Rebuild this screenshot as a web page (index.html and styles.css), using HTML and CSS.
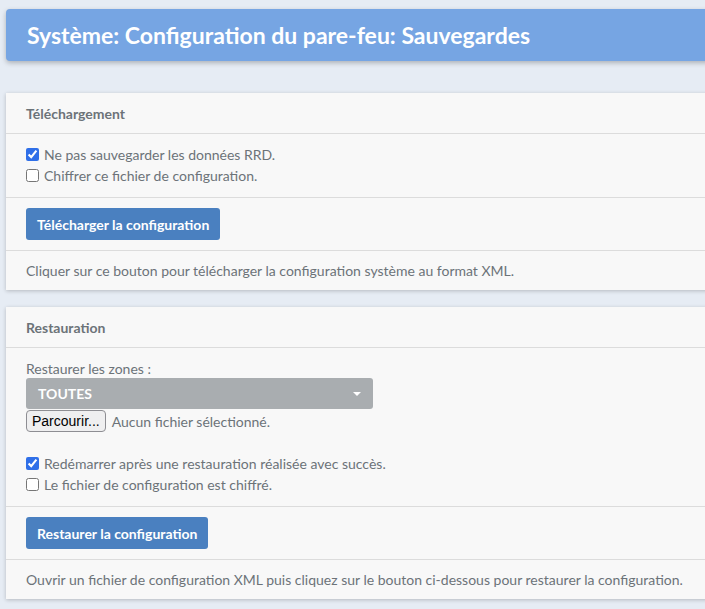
FILE: index.html
```html
<!DOCTYPE html>
<html lang="fr">
<head>
<meta charset="utf-8">
<title>Sauvegardes</title>
<link rel="stylesheet" href="styles.css">
</head>
<body>
<div class="page">
  <div class="title-bar"><h1>Système: Configuration du pare-feu: Sauvegardes</h1></div>

  <section class="card card-first">
    <div class="card-header">Téléchargement</div>
    <div class="card-body">
      <label class="check"><input type="checkbox" checked> Ne pas sauvegarder les données RRD.</label>
      <label class="check"><input type="checkbox"> Chiffrer ce fichier de configuration.</label>
    </div>
    <div class="card-actions">
      <button class="btn" type="button">Télécharger la configuration</button>
    </div>
    <div class="card-footer">Cliquer sur ce bouton pour télécharger la configuration système au format XML.</div>
  </section>

  <section class="card">
    <div class="card-header">Restauration</div>
    <div class="card-body">
      <div class="field-label">Restaurer les zones :</div>
      <div class="select"><span>TOUTES</span><span class="caret"></span></div>
      <div class="file-row"><span class="file-btn">Parcourir...</span><span class="file-name">Aucun fichier sélectionné.</span></div>
      <div class="checks-gap">
        <label class="check"><input type="checkbox" checked> Redémarrer après une restauration réalisée avec succès.</label>
        <label class="check"><input type="checkbox"> Le fichier de configuration est chiffré.</label>
      </div>
    </div>
    <div class="card-actions">
      <button class="btn" type="button">Restaurer la configuration</button>
    </div>
    <div class="card-footer">Ouvrir un fichier de configuration XML puis cliquez sur le bouton ci-dessous pour restaurer la configuration.</div>
  </section>
</div>
</body>
</html>
```

FILE: styles.css
```css
html { overflow: hidden; }
body {
  margin: 0;
  background: #e6ecf4;
  font-family: Lato, "Open Sans", sans-serif;
  font-size: 14px;
  color: #6c7378;
}
.page {
  width: 760px;
  padding: 9px 0 20px 6px;
}
.title-bar {
  background: #76a5e3;
  border-radius: 4px;
  height: 52px;
  display: flex;
  align-items: center;
  padding-left: 21px;
  box-shadow: 0 2px 5px rgba(0,0,0,0.25);
}
.title-bar h1 {
  margin: 0;
  color: #ffffff;
  font-size: 23px;
  font-weight: 700;
}
.card {
  background: #f8f8f8;
  margin-top: 17px;
  box-shadow: 0 1px 4px rgba(0,0,0,0.22);
}
.card-first { margin-top: 32px; }
.card-header {
  height: 40px;
  display: flex;
  align-items: center;
  padding: 0 20px;
  font-weight: 700;
  border-bottom: 1px solid #dcdcdc;
  color: #6c7378;
}
.card-body {
  padding: 10px 20px 11px;
  border-bottom: 1px solid #dcdcdc;
}
.check {
  display: flex;
  align-items: center;
  height: 21px;
}
.check input {
  margin: 0 5px 0 0;
  width: 13px;
  height: 13px;
  accent-color: #2f6fe8;
}
.card-actions {
  padding: 10px 20px;
  border-bottom: 1px solid #dcdcdc;
}
.btn {
  background: #4a80c0;
  color: #ffffff;
  border: none;
  border-radius: 3px;
  height: 32px;
  padding: 0 11px;
  font-family: Lato, sans-serif;
  font-size: 14px;
  font-weight: 700;
}
.card-footer {
  height: 39px;
  display: flex;
  align-items: center;
  padding: 0 20px;
}
.field-label {
  height: 20px;
  display: flex;
  align-items: center;
}
.select {
  width: 347px;
  height: 31px;
  box-sizing: border-box;
  background: #a9adb0;
  border-radius: 3px;
  color: #ffffff;
  font-weight: 700;
  display: flex;
  align-items: center;
  justify-content: space-between;
  padding: 0 12px;
}
.caret {
  width: 0;
  height: 0;
  border-left: 4px solid transparent;
  border-right: 4px solid transparent;
  border-top: 4px solid #ffffff;
}
.file-row {
  display: flex;
  align-items: center;
  height: 22px;
  margin-top: 1px;
}
.file-btn {
  font-family: "Liberation Sans", Arial, sans-serif;
  font-size: 14px;
  color: #000;
  background: #efeff0;
  border: 1px solid #8e8e93;
  border-radius: 4px;
  height: 22px;
  box-sizing: border-box;
  display: flex;
  align-items: center;
  padding: 0 5px;
}
.file-name { margin-left: 6px; }
.checks-gap { margin-top: 21px; }
```
